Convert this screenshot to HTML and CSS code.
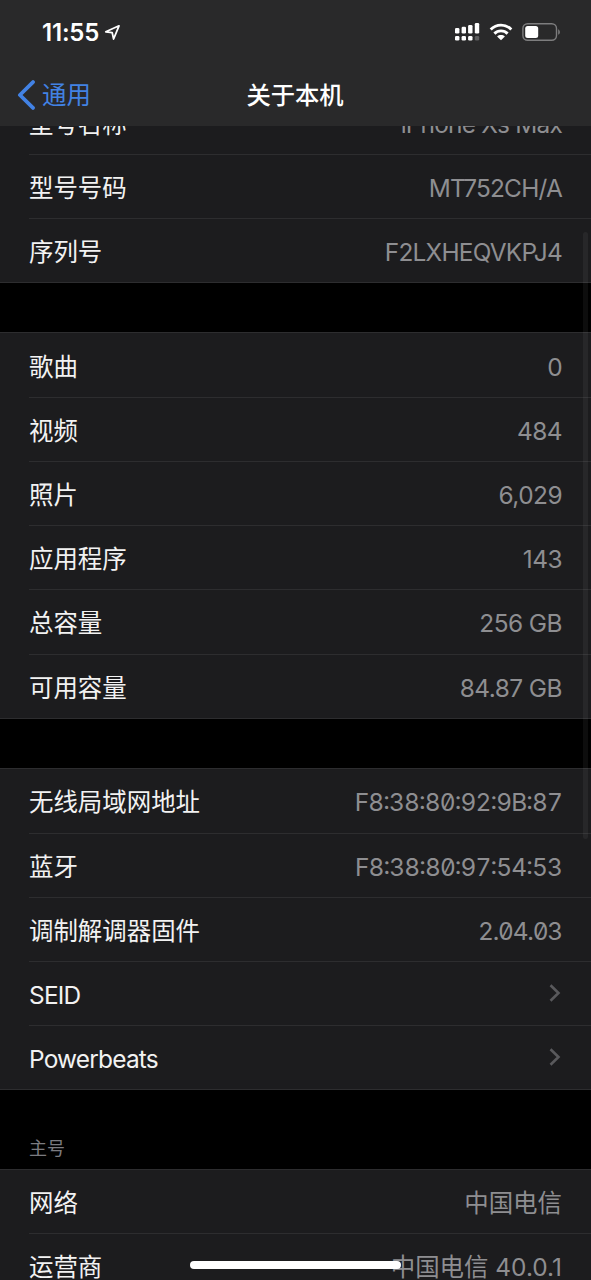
FILE: index.html
```html
<!DOCTYPE html>
<html lang="zh-CN">
<head>
<meta charset="utf-8">
<title>关于本机</title>
<link rel="stylesheet" href="styles.css">
</head>
<body>
<div class="screen">
  <header class="header">
    <div class="status">
      <div class="clock">
        <span class="time">11:55</span>
        <svg class="location" width="17" height="17" viewBox="0 0 17 17"><path d="M15 1.8 1.8 7.8 8.2 8.6 9.6 15Z" fill="none" stroke="#fff" stroke-width="1.8" stroke-linejoin="round"/></svg>
      </div>
      <div class="indicators">
        <svg width="26" height="20" viewBox="0 0 26 20" fill="#fff">
          <rect x="1" y="6" width="4.4" height="5.6" rx="1.3"/><rect x="7.6" y="4.7" width="4.4" height="6.9" rx="1.3"/><rect x="14.1" y="3" width="4.4" height="8.6" rx="1.3"/><rect x="20.8" y="1" width="4.4" height="10.6" rx="1.3"/>
          <rect x="1" y="14" width="4.4" height="4.6" rx="1.3"/><rect x="7.6" y="14" width="4.4" height="4.6" rx="1.3"/><rect x="14.1" y="14" width="4.4" height="4.6" rx="1.3"/><rect x="20.8" y="14" width="4.4" height="4.6" rx="1.3" fill="#5d5d5e"/>
        </svg>
        <svg class="wifi" width="24" height="20" viewBox="0 0 24 20"><g fill="none" stroke="#fff" stroke-width="2.9"><path d="M1.7 7.5C7.5 1.7 16.5 1.7 22.3 7.5"/><path d="M5.4 11.6C9 8 15 8 18.6 11.6"/></g><path d="M8.1 14.5C10.3 12.6 13.7 12.6 15.9 14.5L12 18.3Z" fill="#fff"/></svg>
        <svg class="battery" width="39" height="20" viewBox="0 0 39 20"><rect x=".9" y="1.7" width="33.6" height="16.6" rx="4.8" fill="none" stroke="#7d7d7e" stroke-width="1.4"/><rect x="3.2" y="4" width="13" height="12" rx="2.5" fill="#fff"/><path d="M36.2 7.2C38.4 8.2 38.4 11.8 36.2 12.8Z" fill="#7d7d7e"/></svg>
      </div>
    </div>
    <nav class="nav">
      <a class="back"><svg width="18" height="30" viewBox="0 0 18 30"><path d="M16 2.1 2.9 15 16 27.9" fill="none" stroke="#4282e4" stroke-width="3.8" stroke-linecap="round" stroke-linejoin="round"/></svg><span>通用</span></a>
      <h1 class="title">关于本机</h1>
    </nav>
  </header>
  <main class="content">
    <section class="group group-clipped">
      <div class="row"><span>型号名称</span><span class="value latin">iPhone Xs Max</span></div>
      <div class="row"><span>型号号码</span><span class="value latin">MT752CH/A</span></div>
      <div class="row"><span>序列号</span><span class="value latin">F2LXHEQVKPJ4</span></div>
    </section>
    <section class="group">
      <div class="row"><span>歌曲</span><span class="value number">0</span></div>
      <div class="row"><span>视频</span><span class="value number">484</span></div>
      <div class="row"><span>照片</span><span class="value number">6,029</span></div>
      <div class="row"><span>应用程序</span><span class="value number">143</span></div>
      <div class="row"><span>总容量</span><span class="value number">256 GB</span></div>
      <div class="row"><span>可用容量</span><span class="value number">84.87 GB</span></div>
    </section>
    <section class="group">
      <div class="row"><span>无线局域网地址</span><span class="value code">F8:38:80:92:9B:87</span></div>
      <div class="row"><span>蓝牙</span><span class="value code">F8:38:80:97:54:53</span></div>
      <div class="row"><span>调制解调器固件</span><span class="value code version">2.04.03</span></div>
      <div class="row"><span class="latin">SEID</span><svg class="chevron" width="12" height="20" viewBox="0 0 12 20"><path d="M1.5 2.2 9.5 10 1.5 17.8"/></svg></div>
      <div class="row"><span class="latin">Powerbeats</span><svg class="chevron" width="12" height="20" viewBox="0 0 12 20"><path d="M1.5 2.2 9.5 10 1.5 17.8"/></svg></div>
    </section>
    <h2 class="caption">主号</h2>
    <section class="group">
      <div class="row"><span>网络</span><span class="value">中国电信</span></div>
      <div class="row"><span>运营商</span><span class="value">中国电信 40.0.1</span></div>
    </section>
  </main>
  <div class="scrollbar"></div>
  <div class="home-indicator"></div>
</div>
</body>
</html>
```
FILE: styles.css
```css
* { box-sizing: border-box; }
body { margin: 0; background: #000; }
.screen {
  position: relative;
  width: 591px;
  height: 1280px;
  overflow: hidden;
  background: #000;
  color: #f2f2f2;
  font: 400 24.45px/36px Inter, "Noto Sans CJK SC", sans-serif;
}
.header { height: 126px; background: #29292a; }
.status {
  display: flex;
  justify-content: space-between;
  align-items: center;
  height: 64px;
  padding: 0 30px 0 42px;
}
.clock { display: flex; align-items: center; gap: 5px; padding-top: 1px; }
.time { color: #fff; font-size: 24px; font-weight: 600; letter-spacing: -.2px; }
.indicators { display: flex; align-items: center; }
.wifi { margin-left: 9px; }
.battery { margin-left: 9px; }
.nav {
  display: grid;
  grid-template-columns: 1fr auto 1fr;
  align-items: center;
  height: 61px;
  padding-left: 17px;
}
.back { display: flex; align-items: center; gap: 7px; color: #4282e4; }
.title { margin: 0 18px 0 0; color: #fff; font-size: 24.3px; font-weight: 500; }
.content { display: flex; flex-direction: column; }
.group {
  flex: none;
  background: #1c1c1e;
  border-top: 1px solid #2d2d2f;
  border-bottom: 1px solid #2d2d2f;
  margin-bottom: 49.4px;
}
.group-clipped {
  display: flex;
  flex-direction: column;
  justify-content: flex-end;
  height: 157px;
  overflow: hidden;
  border-top: 0;
}
.row {
  flex: none;
  display: flex;
  justify-content: space-between;
  align-items: center;
  height: 64.2px;
  margin-left: 29px;
  padding: 3px 29px 0 0;
}
.row:first-child { height: 63.4px; }
.group-clipped .row { padding-top: 4px; }
.row + .row { border-top: 1px solid #2d2d2f; }
.value { color: #8e8e91; }
.latin { letter-spacing: -.8px; }
.number { letter-spacing: -.55px; }
.code { letter-spacing: -.85px; font-feature-settings: "zero", "tnum", "case"; }
.version { letter-spacing: -1.2px; }
.chevron { margin: -4px 1px 0 0; fill: none; stroke: #59595c; stroke-width: 2.6; }
.caption {
  margin: -4px 0 7px 29px;
  color: #7b7b80;
  font-size: 18px;
  font-weight: 400;
  line-height: 26px;
}
.scrollbar {
  position: absolute;
  right: 3px;
  top: 232px;
  width: 5px;
  height: 607px;
  border-radius: 3px;
  background: rgb(255 255 255 / 5%);
}
.home-indicator {
  position: absolute;
  left: 190px;
  top: 1261px;
  width: 211px;
  height: 8px;
  border-radius: 4px;
  background: #fff;
}
```
